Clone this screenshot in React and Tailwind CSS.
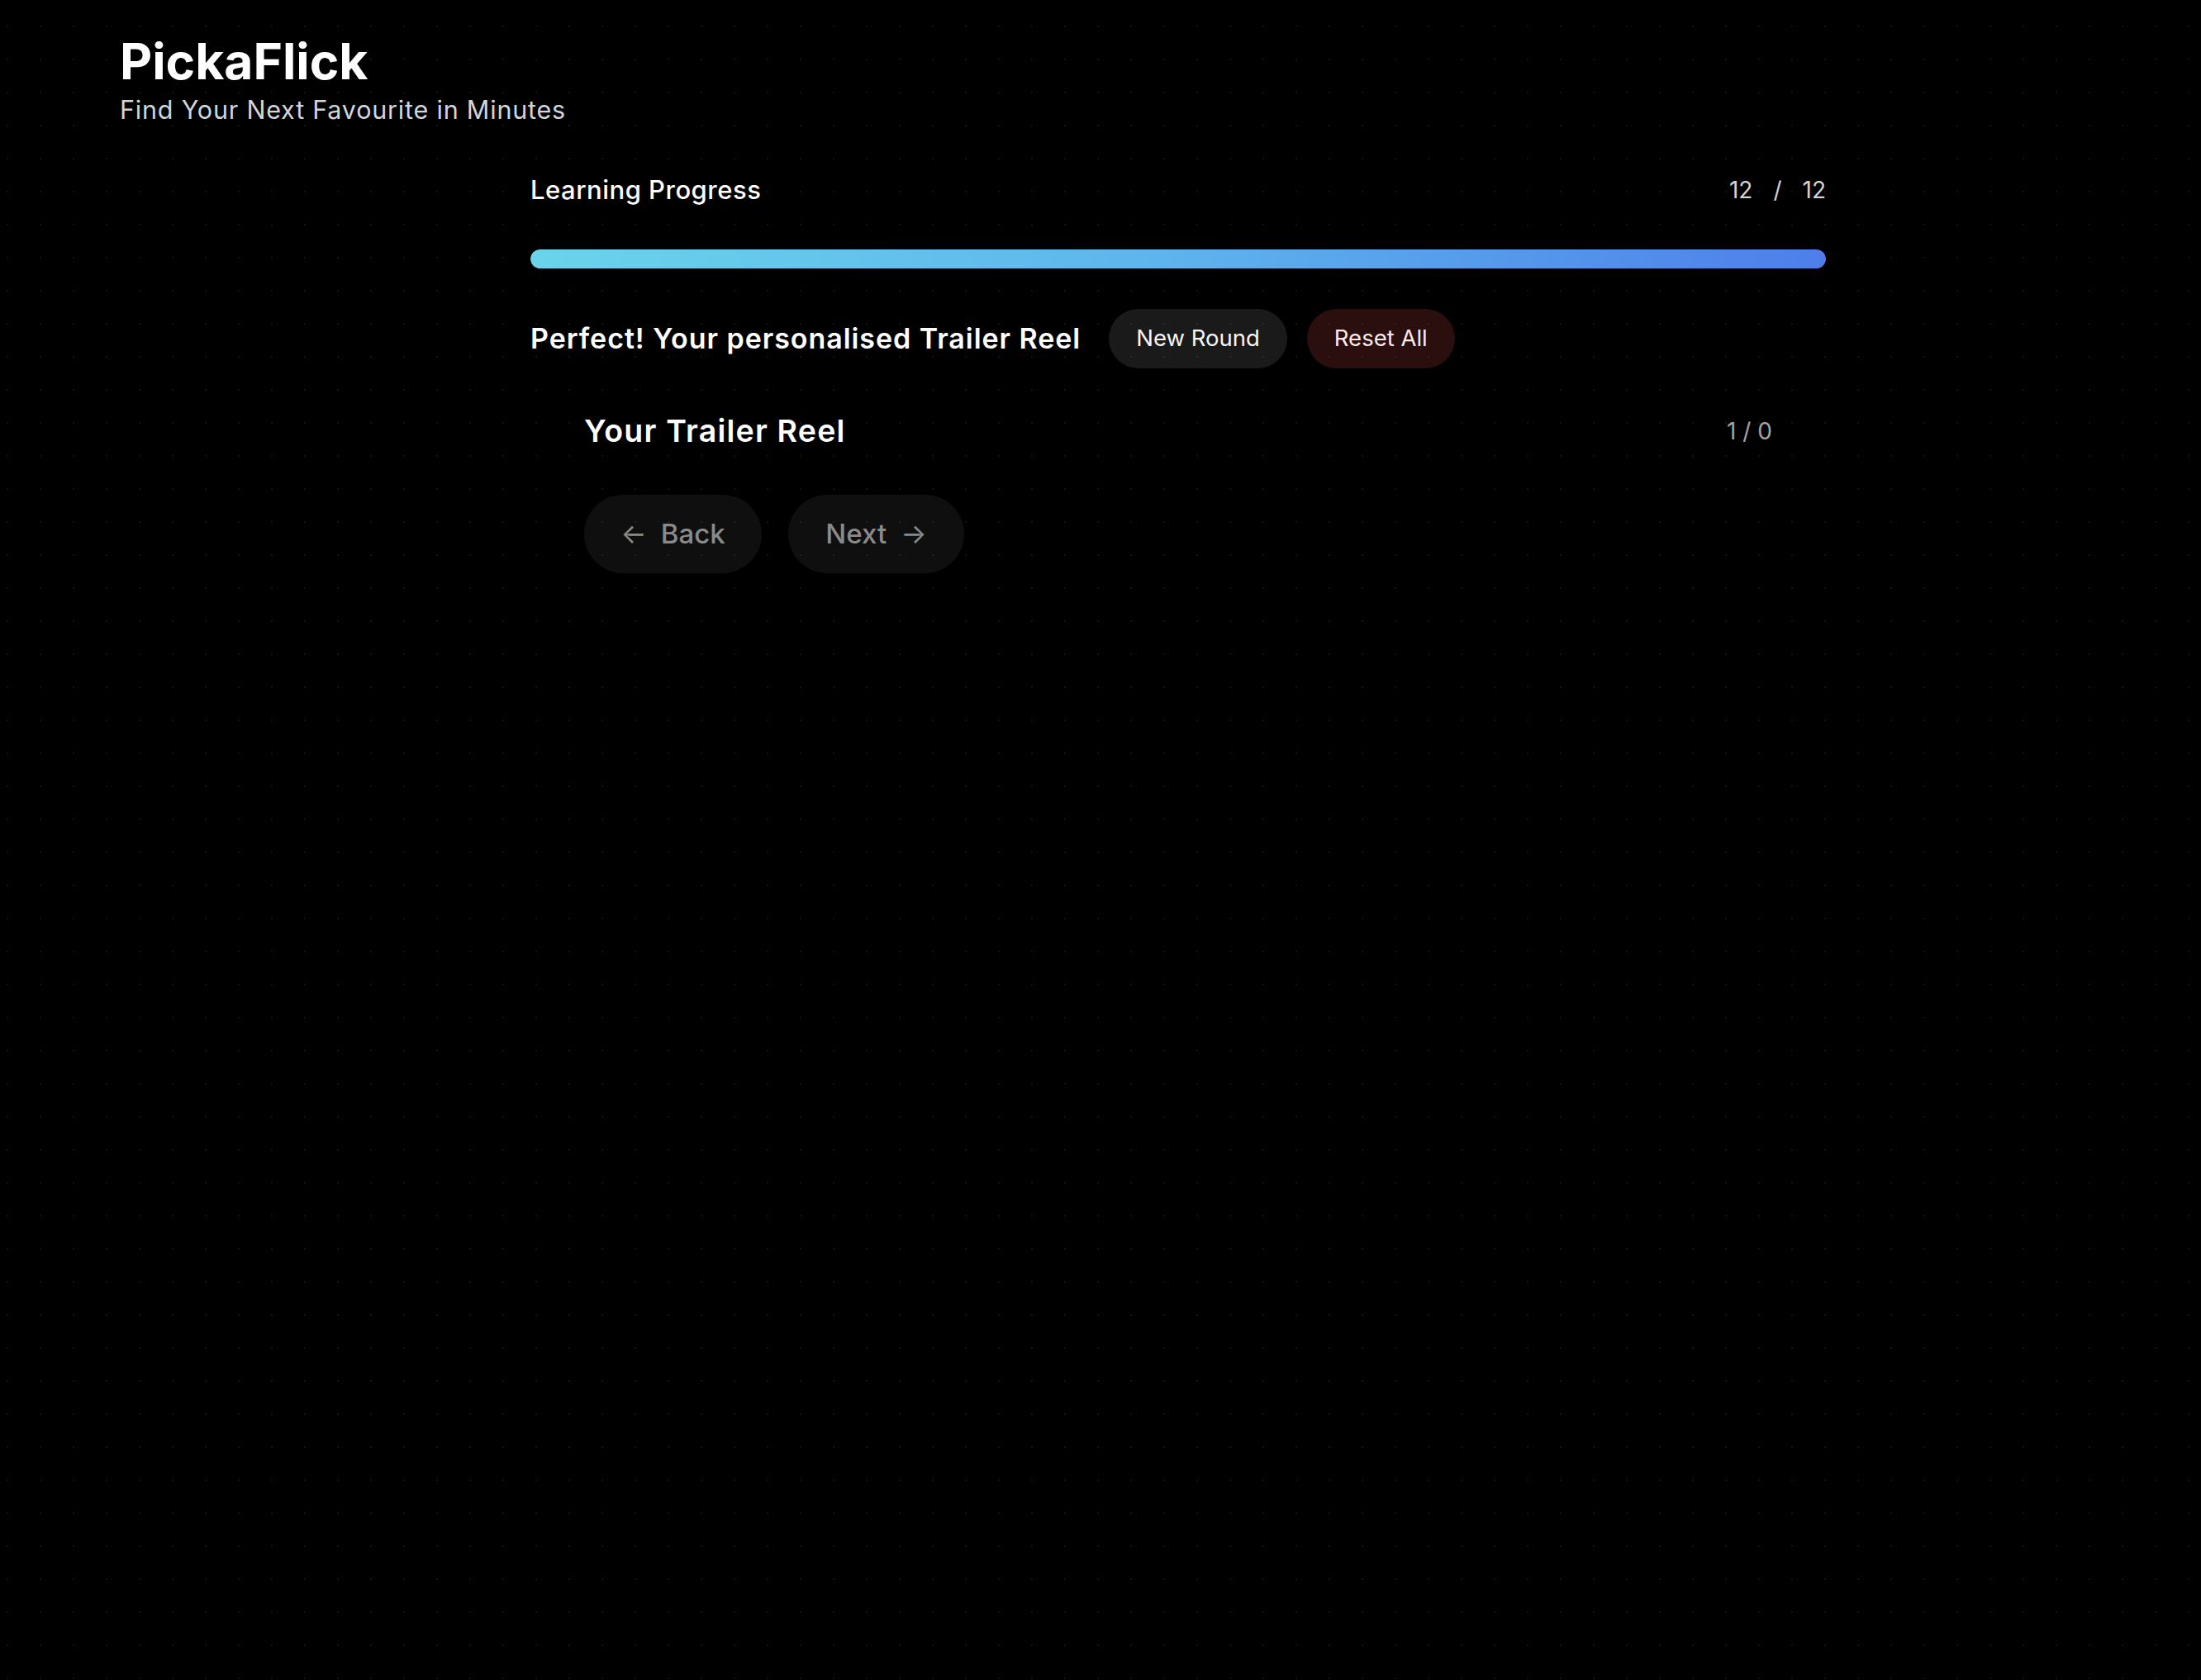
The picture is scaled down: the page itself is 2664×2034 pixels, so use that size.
import React from 'react';

export default function App() {
  const done = 12;
  const total = 12;
  const pct = Math.round((done / total) * 100);

  return (
    <div className="min-h-screen bg-black bg-[radial-gradient(circle,#141414_1.2px,transparent_1.4px)] bg-[size:40px_40px] bg-[position:-11px_12px] text-white font-['Inter','Noto_Sans',sans-serif]">
      {/* header */}
      <header className="pt-[44px] pl-[145px]">
        <h1 className="text-[60.5px] leading-[60px] font-bold">PickaFlick</h1>
        <p className="mt-[8px] text-[30.5px] leading-[42px] tracking-[0.8px] text-[#d1d5dc]">Find Your Next Favourite in Minutes</p>
      </header>

      <main className="ml-[642px] w-[1568px] mt-[60px]">
        {/* progress */}
        <div className="flex items-center justify-between h-[31px]">
          <span className="text-[31px] leading-none font-medium tracking-[0.5px]">Learning Progress</span>
          <span className="flex gap-[25px] text-[28px] leading-none text-[#d4d4d4]">
            <span>{done}</span>
            <span>/</span>
            <span>{total}</span>
          </span>
        </div>
        <div className="mt-[57px] h-[23px] rounded-full bg-white/10 overflow-hidden">
          <div
            className="h-full rounded-full bg-gradient-to-r from-[#6ad4ea] via-[#5eb3ec] to-[#4e7eea]"
            style={{ width: `${pct}%` }}
          />
        </div>

        {/* result row */}
        <div className="mt-[49px] flex items-center">
          <h2 className="text-[34px] leading-none font-semibold tracking-[0.95px]">Perfect! Your personalised Trailer Reel</h2>
          <button className="ml-[34px] h-[72px] px-[33px] rounded-full bg-white/10 text-[27.5px] leading-none text-[#f5f5f5]">
            New Round
          </button>
          <button className="ml-[24px] h-[72px] px-[33px] rounded-full bg-[#ff5a5a]/[0.17] text-[27.5px] leading-none text-[#fbeaea]">
            Reset All
          </button>
        </div>

        {/* reel */}
        <section className="mt-[57px] px-[65px]">
          <div className="flex items-center justify-between">
            <h3 className="text-[37.5px] leading-none font-semibold tracking-[1.2px]">Your Trailer Reel</h3>
            <span className="text-[28px] leading-none text-[#a3a3a3]">1 / 0</span>
          </div>
          <div className="mt-[58px] flex gap-[32px]">
            <button
              disabled
              className="h-[95px] w-[215px] flex items-center justify-center gap-[17px] rounded-full bg-white/[0.06] text-[33px] leading-none font-medium text-[#8a8a8a]"
            >
              <span className="font-normal">←</span>
              <span>Back</span>
            </button>
            <button
              disabled
              className="h-[95px] w-[213px] flex items-center justify-center gap-[17px] rounded-full bg-white/[0.06] text-[33px] leading-none font-medium text-[#8a8a8a]"
            >
              <span>Next</span>
              <span className="font-normal">→</span>
            </button>
          </div>
        </section>
      </main>
    </div>
  );
}
